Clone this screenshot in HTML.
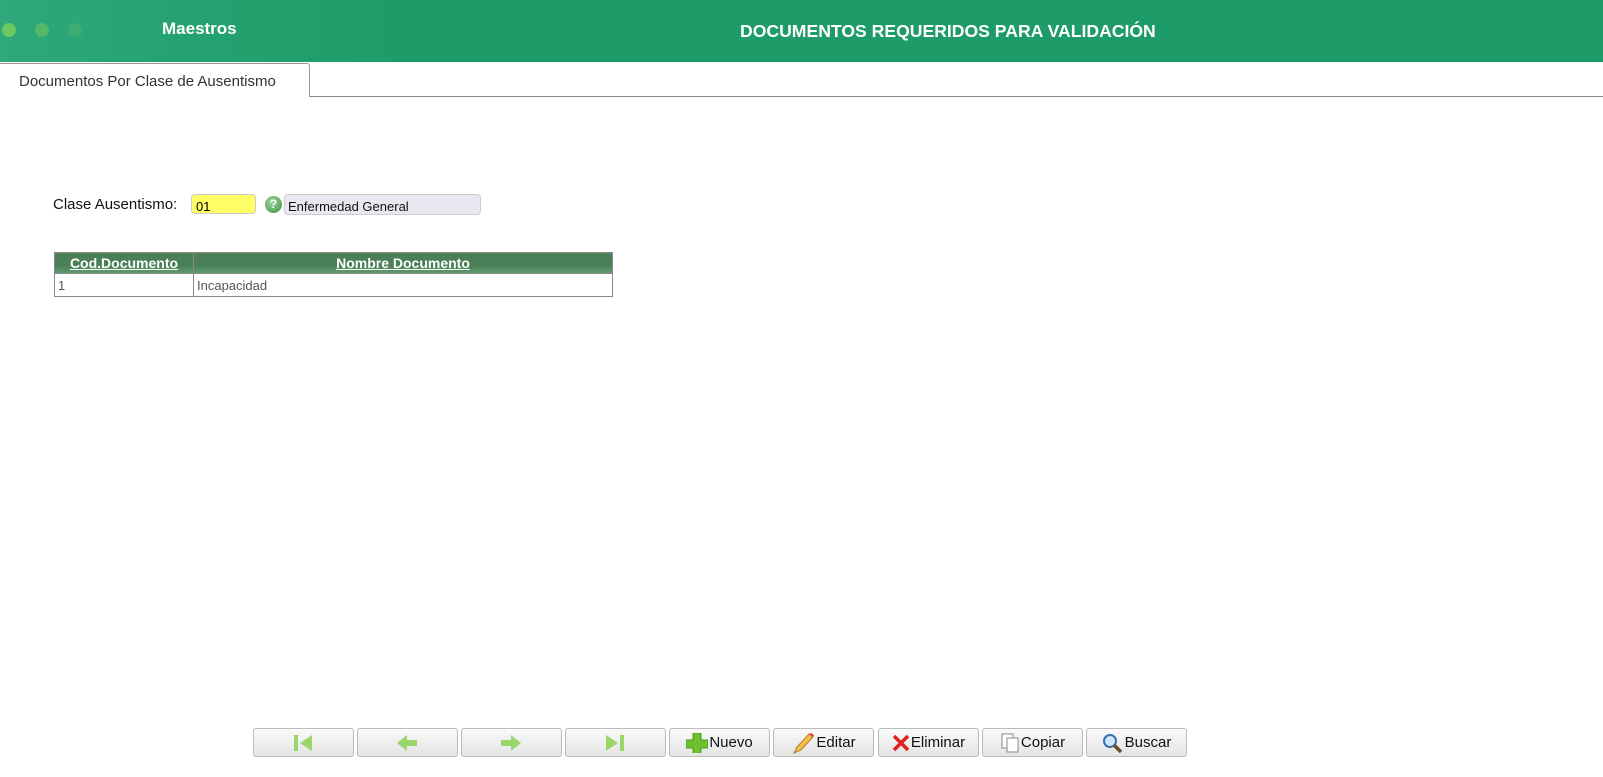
<!DOCTYPE html>
<html><head><meta charset="utf-8"><style>
*{box-sizing:border-box;margin:0;padding:0}
body{width:1603px;height:777px;background:#fff;font-family:"Liberation Sans",sans-serif;position:relative;overflow:hidden}
.hdr{position:absolute;left:0;top:0;width:1603px;height:62px;background:linear-gradient(90deg,#2fa87a 0px,#22a06e 250px,#1d9b69 400px,#1d9b69 100%)}
.dot{position:absolute;top:23px;width:14px;height:14px;border-radius:50%}
.hdr .t1{position:absolute;left:162px;top:19px;color:#fff;font-weight:bold;font-size:17px}
.hdr .t2{position:absolute;left:740px;top:21px;color:#fff;font-weight:bold;font-size:17.6px}
.tabline{position:absolute;left:0;top:96px;width:1603px;height:1px;background:#888}
.tab{position:absolute;left:0;top:63px;width:310px;height:34px;background:#fff;border:1px solid #999;border-left:none;border-bottom:none;border-radius:0 3px 0 0;font-size:15px;color:#333;padding:9px 0 0 19px}
.lbl{position:absolute;left:53px;top:196px;font-size:15px;color:#111}
.in1{position:absolute;left:191px;top:194px;width:65px;height:20px;background:#ffff66;border:1px solid #ccc;border-radius:4px;font-size:13px;padding:4px 0 0 4px}
.q{position:absolute;left:265px;top:196px;width:17px;height:17px;border-radius:50%;background:radial-gradient(circle at 40% 35%,#9fd79f,#3b8f3b);color:#fff;font-size:12px;font-weight:bold;text-align:center;line-height:17px}
.in2{position:absolute;left:284px;top:194px;width:197px;height:21px;background:#e8e8f0;border:1px solid #ccc;border-radius:4px;font-size:13px;padding:4px 0 0 3px;color:#111}
table{position:absolute;left:54px;top:252px;width:559px;border-collapse:collapse;font-size:13px}
th{height:21px;background:linear-gradient(#4a7f57,#4a7f57 60%,#5f9b6d);color:#fff;text-decoration:underline;font-weight:bold;border:1px solid #888;font-size:14px}
td{height:23px;border:1px solid #888;color:#555;padding-left:3px}
.btn{position:absolute;top:728px;width:101px;height:29px;border:1px solid #bbb;border-radius:3px;background:linear-gradient(#fafafa,#e4e4e4);font-size:15px;color:#111;display:flex;align-items:center;justify-content:center}
.btn svg{margin-right:1px}
</style></head><body>
<div class="hdr">
<div class="dot" style="left:2px;background:#7ccf5c;opacity:.8"></div>
<div class="dot" style="left:35px;background:#6cc35c;opacity:.6"></div>
<div class="dot" style="left:68px;background:#5cb86a;opacity:.4"></div>
<div class="t1">Maestros</div>
<div class="t2">DOCUMENTOS REQUERIDOS PARA VALIDACIÓN</div>
</div>
<div class="tabline"></div>
<div class="tab">Documentos Por Clase de Ausentismo</div>
<div class="lbl">Clase Ausentismo:</div>
<div class="in1">01</div>
<div class="q">?</div>
<div class="in2">Enfermedad General</div>
<table><tr><th style="width:139px">Cod.Documento</th><th>Nombre Documento</th></tr>
<tr><td>1</td><td>Incapacidad</td></tr></table>

<div class="btn" style="left:253px"><svg width="22" height="20"><rect x="2" y="2" width="4" height="16" fill="#9bd66a"/><path d="M20 2v16L8 10z" fill="#9bd66a"/></svg></div>
<div class="btn" style="left:357px"><svg width="24" height="20"><path d="M2 10l10-8v5h10v6H12v5z" fill="#9bd66a"/></svg></div>
<div class="btn" style="left:461px"><svg width="24" height="20"><path d="M22 10L12 2v5H2v6h10v5z" fill="#9bd66a"/></svg></div>
<div class="btn" style="left:565px"><svg width="22" height="20"><path d="M2 2v16l12-8z" fill="#9bd66a"/><rect x="16" y="2" width="4" height="16" fill="#9bd66a"/></svg></div>
<div class="btn" style="left:669px"><svg width="22" height="20"><path d="M7 0h8v7h7v8h-7v7H7v-7H0V7h7z" fill="#6cc22e" stroke="#4a9a1a"/></svg>Nuevo</div>
<div class="btn" style="left:773px"><svg width="24" height="22"><path d="M3 21l3-6L18 2l4 3L10 18z" fill="#f2c14e" stroke="#b07a20"/><path d="M18 2l4 3 1-2-3-2z" fill="#e04040"/></svg>Editar</div>
<div class="btn" style="left:878px"><svg width="18" height="20"><path d="M2 3l14 14M16 3L2 17" stroke="#e02020" stroke-width="3.5"/></svg>Eliminar</div>
<div class="btn" style="left:982px"><svg width="20" height="20"><rect x="2" y="1" width="11" height="14" fill="#fff" stroke="#888"/><rect x="7" y="5" width="11" height="14" fill="#fff" stroke="#888"/></svg>Copiar</div>
<div class="btn" style="left:1086px"><svg width="22" height="20"><circle cx="8" cy="8" r="6" fill="#cfe6ff" stroke="#3a70b0" stroke-width="2"/><path d="M12 12l7 7" stroke="#6a4a2a" stroke-width="3.5"/></svg>Buscar</div>
</body></html>
